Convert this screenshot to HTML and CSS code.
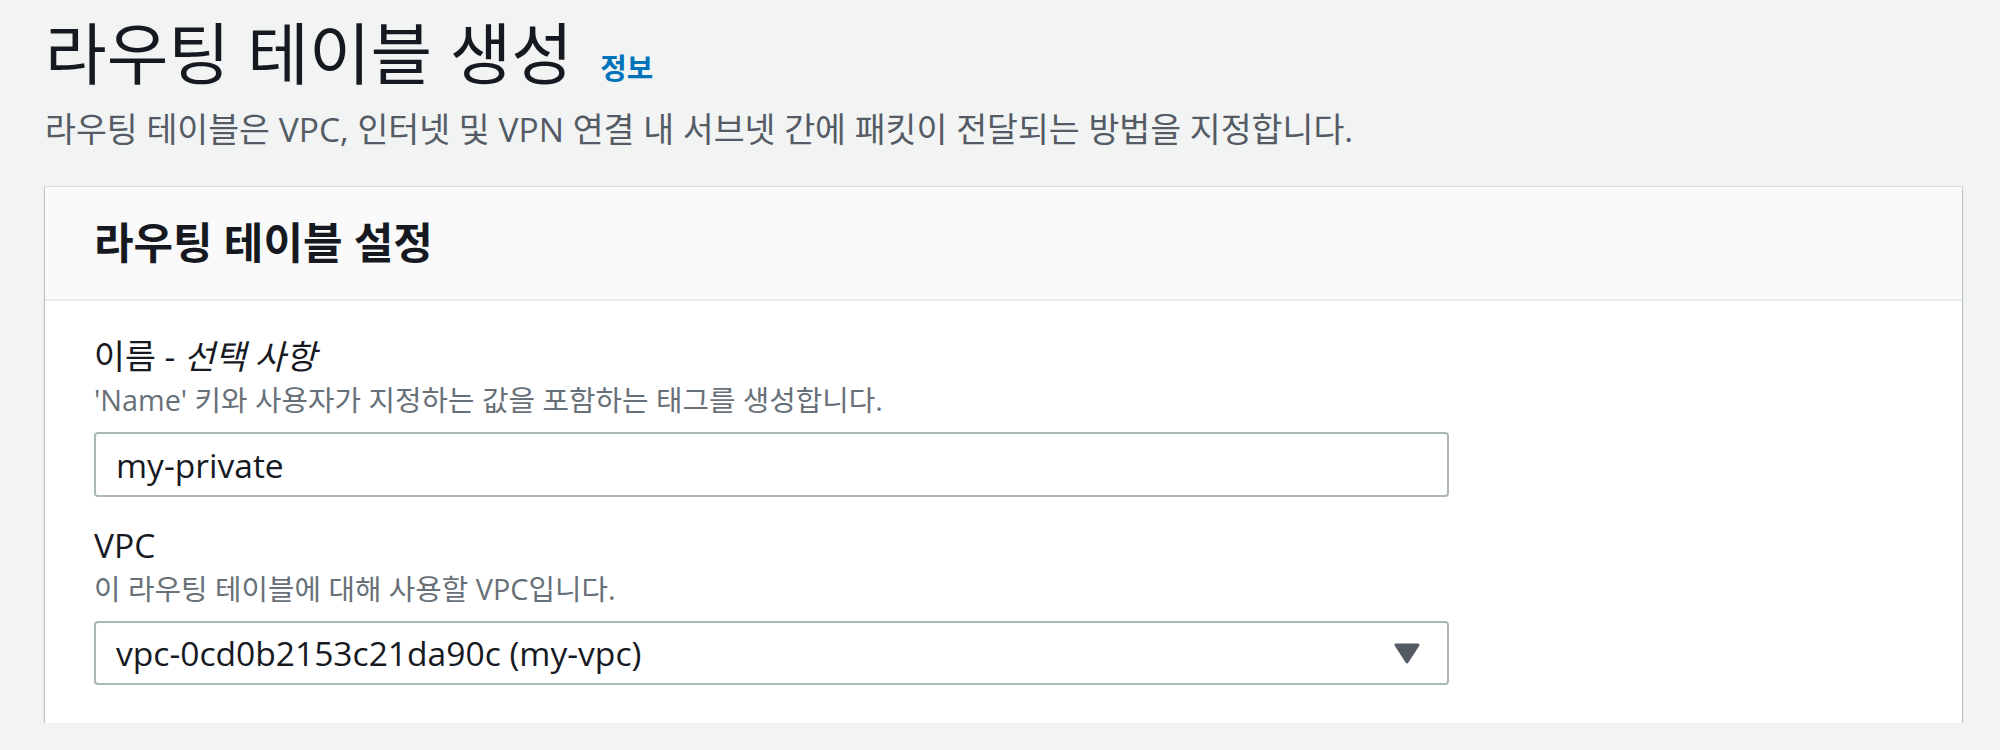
FILE: index.html
```html
<!DOCTYPE html>
<html lang="ko">
<head>
<meta charset="utf-8">
<title>라우팅 테이블 생성</title>
<link rel="stylesheet" href="styles.css">
</head>
<body>
<div class="page">
  <header class="page-head">
    <h1 class="title">라우팅 테이블 생성 <a class="info" href="#">정보</a></h1>
    <p class="subtitle">라우팅 테이블은 VPC, 인터넷 및 VPN 연결 내 서브넷 간에 패킷이 전달되는 방법을 지정합니다.</p>
  </header>
  <section class="card">
    <div class="card-head">
      <h2 class="card-title">라우팅 테이블 설정</h2>
    </div>
    <div class="card-body">
      <div class="field">
        <div class="label">이름 - <i class="optional">선택 사항</i></div>
        <div class="hint">'Name' 키와 사용자가 지정하는 값을 포함하는 태그를 생성합니다.</div>
        <div class="control input">my-private</div>
      </div>
      <div class="field">
        <div class="label">VPC</div>
        <div class="hint">이 라우팅 테이블에 대해 사용할 VPC입니다.</div>
        <div class="control select">
          <span class="value">vpc-0cd0b2153c21da90c (my-vpc)</span>
          <svg class="caret" width="26" height="21" viewBox="0 0 26 21"><path d="M2 2 H24 L13 19 Z" fill="#545b64" stroke="#545b64" stroke-width="3" stroke-linejoin="round"/></svg>
        </div>
      </div>
    </div>
  </section>
</div>
</body>
</html>
```

FILE: styles.css
```css
html, body {
  margin: 0;
  padding: 0;
  background: #f2f3f3;
}
body {
  font-family: "Open Sans", "Noto Sans CJK KR", sans-serif;
  color: #16191f;
}
.page {
  padding: 8px 38px 0 45px;
}
.title {
  margin: 0;
  font-size: 67px;
  line-height: 90px;
  font-weight: 400;
  color: #16191f;
}
.info {
  margin-left: 10px;
  font-size: 28.8px;
  line-height: 1;
  font-weight: 700;
  color: #0073bb;
  text-decoration: none;
}
.subtitle {
  margin: 7px 0 0;
  font-size: 33.6px;
  line-height: 48px;
  color: #545b64;
}
.card {
  margin-top: 34px;
  background: #fff;
  box-shadow: 0 0 0 1px rgba(0, 28, 36, 0.08), 0 2px 0 0 rgba(0, 28, 36, 0.32), 0 3px 2px 0 rgba(0, 28, 36, 0.16), 1px 0 1px 0 rgba(0, 28, 36, 0.1), -1px 0 1px 0 rgba(0, 28, 36, 0.1);
}
.card-head {
  height: 112px;
  display: flex;
  align-items: center;
  padding: 0 49px;
  background: #fafafa;
  border-bottom: 2px solid #eaeded;
}
.card-title {
  margin: 0;
  font-size: 43px;
  line-height: 60px;
  font-weight: 700;
}
.card-body {
  padding: 32px 49px 38px;
  display: flex;
  flex-direction: column;
  gap: 25px;
}
.field {
  display: flex;
  flex-direction: column;
}
.label {
  font-size: 33.6px;
  line-height: 46px;
}
.optional {
  font-style: italic;
}
.hint {
  font-size: 28.8px;
  line-height: 42px;
  color: #687078;
}
.control {
  margin-top: 11px;
  width: 1355px;
  height: 65px;
  box-sizing: border-box;
  border: 2px solid #aab7b8;
  border-radius: 4px;
  padding: 0 27px 0 20px;
  display: flex;
  align-items: center;
  font-size: 33.6px;
  color: #16191f;
}
.select {
  height: 64px;
  justify-content: space-between;
}
.caret {
  display: block;
}
```
